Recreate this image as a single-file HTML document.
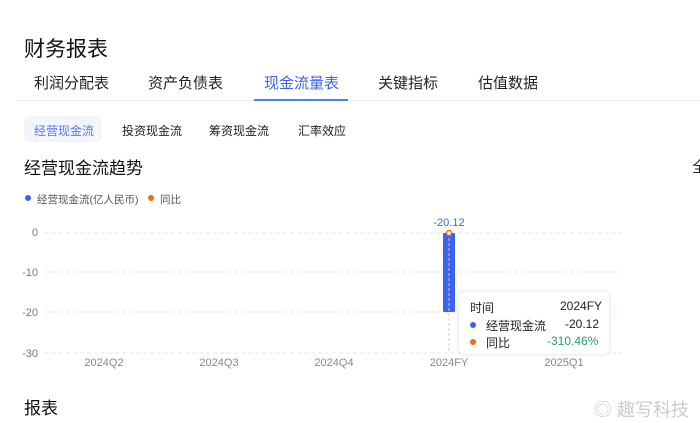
<!DOCTYPE html><html><head><meta charset="utf-8"><style>
body{margin:0;width:700px;height:423px;background:#fff;font-family:"Liberation Sans","Noto Sans CJK SC",sans-serif;position:relative;overflow:hidden;color:#222}
.a{position:absolute;white-space:nowrap}
</style></head><body>
<div class="a" style="left:24px;top:33px;font-size:21px;color:#111">财务报表</div>
<div class="a" style="left:34px;top:72px;font-size:15px;color:#222">利润分配表</div>
<div class="a" style="left:148px;top:72px;font-size:15px">资产负债表</div>
<div class="a" style="left:264px;top:72px;font-size:15px;color:#3b63f0">现金流量表</div>
<div class="a" style="left:378px;top:72px;font-size:15px">关键指标</div>
<div class="a" style="left:478px;top:72px;font-size:15px">估值数据</div>
<div class="a" style="left:18px;top:100px;width:682px;height:1px;background:#eee"></div>
<div class="a" style="left:254px;top:99px;width:94px;height:2px;background:#4f7ef5"></div>
<div class="a" style="left:24px;top:116px;width:78px;height:26px;background:#f2f5fc;border-radius:6px"></div>
<div class="a" style="left:34px;top:122px;font-size:12px;color:#5a78f0">经营现金流</div>
<div class="a" style="left:122px;top:122px;font-size:12px">投资现金流</div>
<div class="a" style="left:209px;top:122px;font-size:12px">筹资现金流</div>
<div class="a" style="left:298px;top:122px;font-size:12px">汇率效应</div>
<div class="a" style="left:24px;top:154px;font-size:17px;color:#111">经营现金流趋势</div>
<div class="a" style="left:692px;top:156px;font-size:15px">全</div>
<div class="a" style="left:25px;top:195px;width:6px;height:6px;border-radius:50%;background:#3b63f0"></div>
<div class="a" style="left:37px;top:192px;font-size:10.5px;color:#555">经营现金流(亿人民币)</div>
<div class="a" style="left:148px;top:195px;width:6px;height:6px;border-radius:50%;background:#f26b1d"></div>
<div class="a" style="left:160px;top:192px;font-size:10.5px;color:#555">同比</div>
<svg class="a" style="left:0;top:0" width="700" height="423">
<g stroke="#e6e6e6" stroke-dasharray="4 3"><line x1="45" y1="233" x2="622" y2="233"/><line x1="45" y1="272" x2="622" y2="272"/><line x1="45" y1="312" x2="622" y2="312"/><line x1="45" y1="353" x2="622" y2="353"/></g>
<g font-size="11" fill="#777" text-anchor="end" font-family="Liberation Sans"><text x="38" y="236">0</text><text x="38" y="276">-10</text><text x="38" y="316">-20</text><text x="38" y="357">-30</text></g>
<rect x="443" y="233" width="12" height="79" rx="1" fill="#3b63f0"/>
<line x1="449" y1="233" x2="449" y2="353" stroke="#ccc" stroke-dasharray="3 2"/>
<circle cx="449" cy="233" r="2.5" fill="#fff" stroke="#f26b1d" stroke-width="1.5"/>
<text x="449" y="226" font-size="11" fill="#3b63f0" text-anchor="middle" font-family="Liberation Sans">-20.12</text>
<g font-size="11" fill="#888" text-anchor="middle" font-family="Liberation Sans"><text x="104" y="366">2024Q2</text><text x="219" y="366">2024Q3</text><text x="334" y="366">2024Q4</text><text x="449" y="366">2024FY</text><text x="564" y="366">2025Q1</text></g>
</svg>
<div class="a" style="left:459px;top:292px;width:150px;height:62px;background:#fff;border-radius:5px;box-shadow:0 0 5px rgba(0,0,0,.15)"></div>
<div class="a" style="left:470px;top:299px;font-size:12px">时间</div>
<div class="a" style="left:560px;top:299px;font-size:12px">2024FY</div>
<div class="a" style="left:470px;top:322px;width:6px;height:6px;border-radius:50%;background:#3b63f0"></div>
<div class="a" style="left:486px;top:317px;font-size:12px">经营现金流</div>
<div class="a" style="left:565px;top:317px;font-size:12px">-20.12</div>
<div class="a" style="left:470px;top:339px;width:6px;height:6px;border-radius:50%;background:#f26b1d"></div>
<div class="a" style="left:486px;top:334px;font-size:12px">同比</div>
<div class="a" style="left:547px;top:334px;font-size:12px;color:#2a9d6f">-310.46%</div>
<div class="a" style="left:24px;top:394px;font-size:17px;color:#111">报表</div>
<div class="a" style="left:594px;top:396px;font-size:18px;color:#ccc">◎ 趣写科技</div>
</body></html>
